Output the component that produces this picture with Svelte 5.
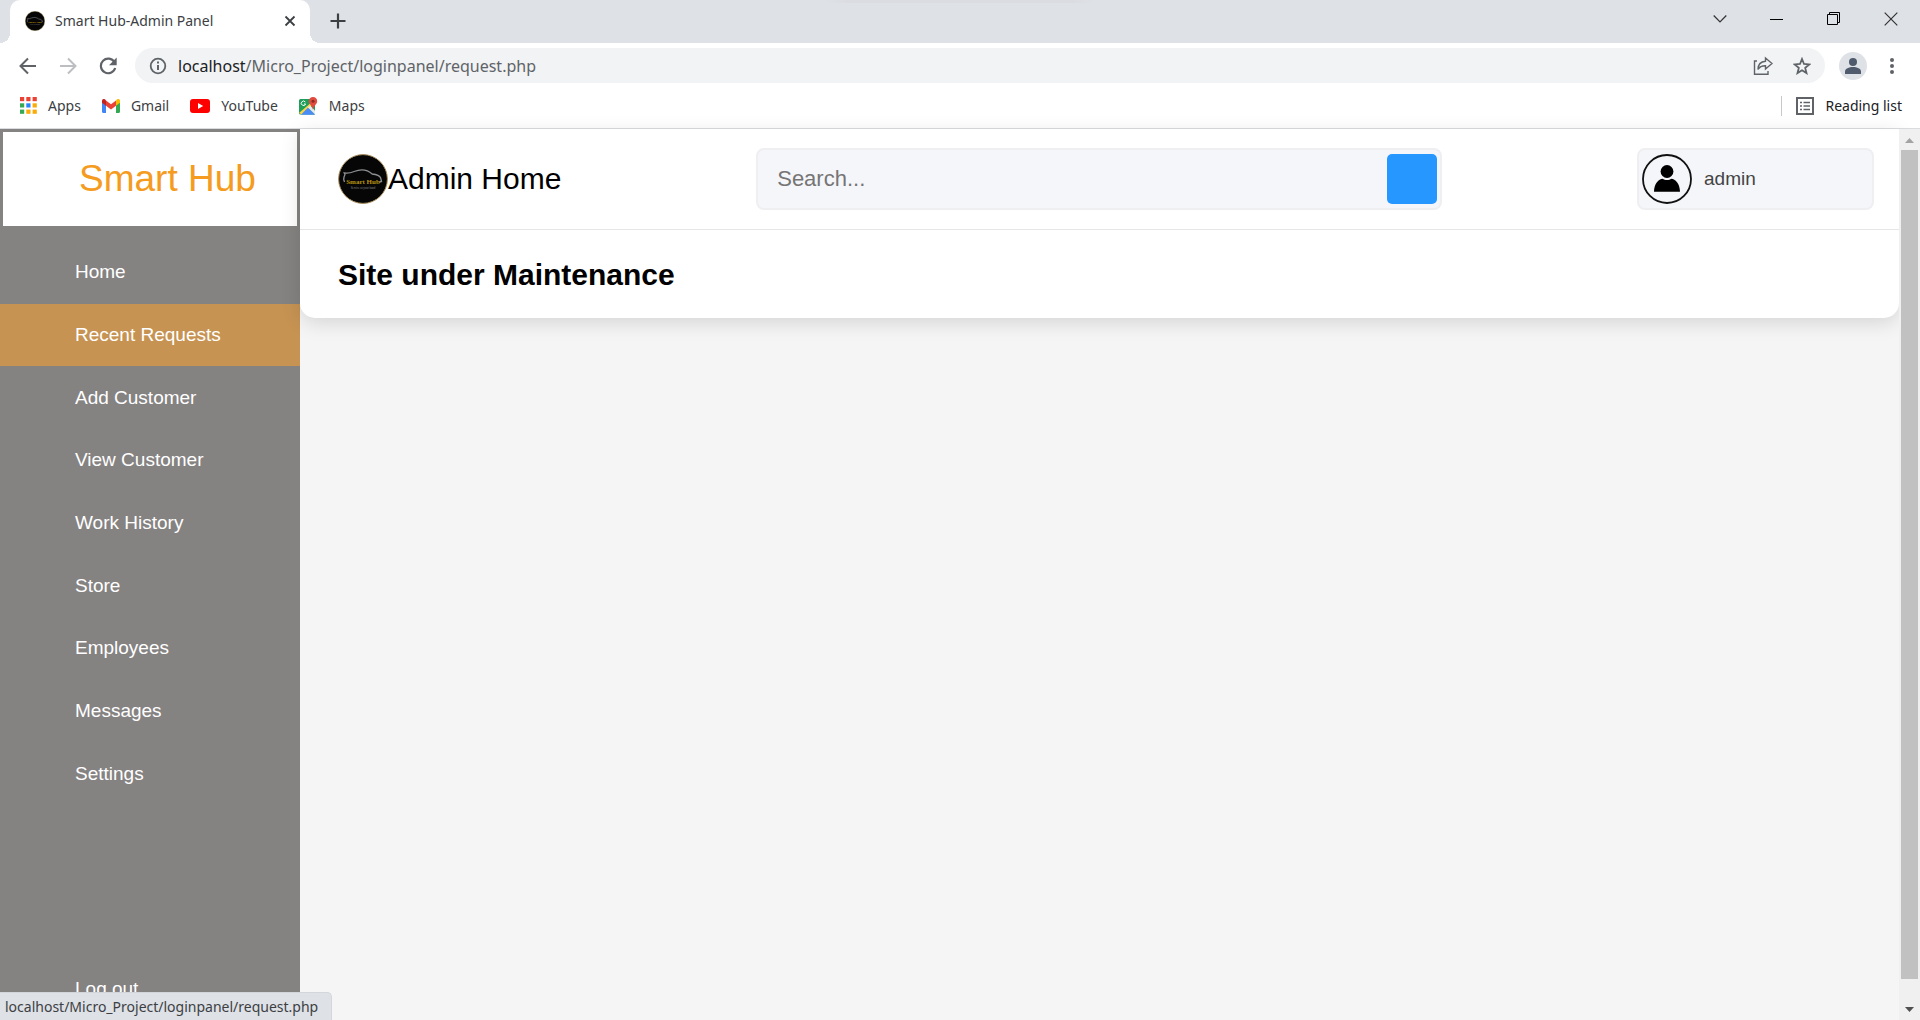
<script>
  const navItems = [
    'Home',
    'Recent Requests',
    'Add Customer',
    'View Customer',
    'Work History',
    'Store',
    'Employees',
    'Messages',
    'Settings'
  ];
  const active = 'Recent Requests';
  const appDots = ['#ea4335', '#ea4335', '#ea4335', '#34a853', '#2a85fb', '#fbab05', '#34a853', '#fbab05', '#fbab05'];
  let query = $state('');
</script>

{#snippet brandLogo()}
  <svg class="brand-logo" viewBox="0 0 50 50" aria-hidden="true">
    <circle cx="25" cy="25" r="24.4" fill="#060606" stroke="#a98f5c" stroke-width="1" />
    <path d="M6.500 28l-.8-2.500c0-2 .5-3.500 1.300-5l-.8-1.500c4 .5 7-.2 10-1.500 6-2.300 13-2 18 2.500 4 .3 7.500 1.500 8.500 4l.8 3.500-2 .5" fill="none" stroke="#8d8f92" stroke-width="1.300" />
    <text x="25" y="29.500" class="brand-name">Smart Hub</text>
    <text x="25" y="35" class="brand-tag">Service at your hand</text>
  </svg>
{/snippet}

<div class="browser">
  <header class="chrome">
    <div class="tab-strip">
      <div class="tab">
        <span class="favicon">{@render brandLogo()}</span>
        <span class="tab-title">Smart Hub-Admin Panel</span>
        <button class="icon-btn close-tab" aria-label="Close tab">
          <svg width="12" height="12" viewBox="0 0 12 12"><path d="M1.500 1.500l9 9m0-9l-9 9" stroke="#3c4043" stroke-width="1.800" /></svg>
        </button>
      </div>
      <button class="icon-btn new-tab" aria-label="New tab">
        <svg width="16" height="16" viewBox="0 0 16 16"><path d="M8 .5v15M.5 8h15" stroke="#3c4043" stroke-width="2.200" /></svg>
      </button>
      <div class="window-controls">
        <button class="icon-btn" aria-label="Search tabs">
          <svg width="14" height="14" viewBox="0 0 14 14"><path d="M.7 3.500L7 10l6.300-6.500" fill="none" stroke="#333" stroke-width="1.200" /></svg>
        </button>
        <button class="icon-btn" aria-label="Minimize">
          <svg width="14" height="14" viewBox="0 0 14 14"><path d="M0 7.500h13" stroke="#000" /></svg>
        </button>
        <button class="icon-btn" aria-label="Restore">
          <svg width="14" height="14" viewBox="0 0 14 14" fill="none" stroke="#000"><path d="M.5 2.500h10v10H.5zM2.500 2.500V.5h10v10h-2" /></svg>
        </button>
        <button class="icon-btn" aria-label="Close window">
          <svg width="14" height="14" viewBox="0 0 14 14"><path d="M.7.7l12.600 12.600m0-12.600L.7 13.300" stroke="#333" stroke-width="1.200" /></svg>
        </button>
      </div>
    </div>

    <div class="toolbar">
      <div class="history">
        <button class="icon-btn" aria-label="Back">
          <svg width="18" height="18" viewBox="0 0 18 18" fill="none" stroke="#5f6368" stroke-width="2"><path d="M17 9H2.500M9 1.500L1.500 9 9 16.500" /></svg>
        </button>
        <button class="icon-btn" aria-label="Forward">
          <svg width="18" height="18" viewBox="0 0 18 18" fill="none" stroke="#bcbec1" stroke-width="2"><path d="M1 9h14.500M9 1.500L16.500 9 9 16.500" /></svg>
        </button>
        <button class="icon-btn" aria-label="Reload">
          <svg width="18" height="18" viewBox="0 0 18 18"><path d="M15.500 5.200A7.300 7.300 0 1 0 16.200 11" fill="none" stroke="#5f6368" stroke-width="2.200" /><path d="M17.700.5v7.800H10z" fill="#5f6368" /></svg>
        </button>
      </div>
      <div class="omnibox">
        <svg width="18" height="18" viewBox="0 0 18 18"><circle cx="9" cy="9" r="7.300" fill="none" stroke="#5f6368" stroke-width="1.800" /><path d="M9 8v5M9 4.500v2" stroke="#5f6368" stroke-width="2" /></svg>
        <span class="url"><b>localhost</b>/Micro_Project/loginpanel/request.php</span>
        <button class="icon-btn" aria-label="Share this page">
          <svg width="20" height="20" viewBox="0 0 20 20" fill="none" stroke="#5f6368" stroke-width="1.400"><path d="M4 5H1.500v13.300H15V15" /><path d="M12.500 2l6.500 5.500-6.500 5.500v-3.300c-3.500 0-6 1-7.500 3.800 0-5 3-8 7.500-8.300z" /></svg>
        </button>
        <button class="icon-btn" aria-label="Bookmark this tab">
          <svg width="18" height="18" viewBox="0 0 18 18" fill="none" stroke="#5f6368" stroke-width="1.800"><path d="M9 2l2 5 5.300.4-4.100 3.500 1.300 5.200L9 13.300l-4.500 2.800 1.300-5.200L1.700 7.400 7 7z" /></svg>
        </button>
      </div>
      <button class="icon-btn account" aria-label="Profile">
        <svg width="28" height="28" viewBox="0 0 28 28"><circle cx="14" cy="14" r="14" fill="#dee1e6" /><circle cx="14" cy="10" r="4" fill="#4f5b6c" /><path d="M6 22v-2.500c0-3 4-4.500 8-4.500s8 1.500 8 4.500V22z" fill="#4f5b6c" /></svg>
      </button>
      <button class="icon-btn menu" aria-label="Browser menu">
        <svg width="4" height="18" viewBox="0 0 4 18" fill="#5f6368"><circle cx="2" cy="3" r="2" /><circle cx="2" cy="9" r="2" /><circle cx="2" cy="15" r="2" /></svg>
      </button>
    </div>

    <nav class="bookmarks" aria-label="Bookmarks">
      <a href="#apps">
        <svg width="17" height="17" viewBox="0 0 17 17">
          {#each appDots as color, i}
            <rect x={(i % 3) * 6.3} y={Math.floor(i / 3) * 6.3} width="4.200" height="4.200" fill={color} />
          {/each}
        </svg>
        <span>Apps</span>
      </a>
      <a href="#gmail">
        <svg width="18" height="14" viewBox="0 0 18 14"><path d="M0 2v10.800C0 13.500.5 14 1.200 14H4V6z" fill="#4285f4" /><path d="M18 2v10.800c0 .7-.5 1.200-1.200 1.200H14V6z" fill="#34a853" /><path d="M14 1.500V6.700l4-3V2c0-2-2-2.500-3.200-1.600z" fill="#fbbc04" /><path d="M4 6.700V1.500l5 3.800 5-3.800v5.200l-5 3.800z" fill="#ea4335" /><path d="M0 2v1.700l4 3V1.500L3.200.4C2-.5 0 0 0 2z" fill="#c5221f" /></svg>
        <span>Gmail</span>
      </a>
      <a href="#youtube">
        <svg width="20" height="14" viewBox="0 0 20 14"><rect width="20" height="14" rx="3" fill="#f00" /><path d="M8 4l5.200 3L8 10z" fill="#fff" /></svg>
        <span>YouTube</span>
      </a>
      <a href="#maps">
        <svg width="19" height="18" viewBox="0 0 19 18"><path d="M1.500 2H12l4 5v10.500H1.500A1.500 1.500 0 0 1 0 16V3.500A1.500 1.500 0 0 1 1.500 2z" fill="#1e9e58" /><path d="M0 16L14 4l2 2L3 17.500z" fill="#fbd349" /><path d="M2 17.800L9 10.500l7 7.300z" fill="#4b8bf5" /><path d="M9 10.500l2-2 5 5v4z" fill="#e8eaed" /><path d="M6.300 5a2.200 2.200 0 1 0 .3 2H5" fill="none" stroke="#fff" /><path d="M14 0a4.200 4.200 0 0 1 4.200 4.300c0 3-3.500 4-4.200 8.700-.7-4.700-4.200-5.700-4.200-8.700A4.200 4.200 0 0 1 14 0z" fill="#e04a3f" /><circle cx="14" cy="4.300" r="1.500" fill="#8b2b22" /></svg>
        <span>Maps</span>
      </a>
      <a class="reading" href="#reading">
        <svg width="18" height="18" viewBox="0 0 18 18"><rect x="1" y="1" width="16" height="16" fill="none" stroke="#5f6368" stroke-width="2" /><path d="M4 5.500h2M4 9h2M4 12.500h2M7.500 5.500H14M7.500 9H14M7.500 12.500H14" stroke="#5f6368" stroke-width="1.600" /></svg>
        <span>Reading list</span>
      </a>
    </nav>
  </header>

  <div class="viewport">
    <aside class="sidebar">
      <div class="brand">Smart Hub</div>
      <nav aria-label="Admin">
        <ul>
          {#each navItems as item}
            <li><a href="#{item}" class:active={item === active}>{item}</a></li>
          {/each}
        </ul>
      </nav>
      <a class="logout" href="#logout">Log out</a>
    </aside>

    <main>
      <div class="card">
        <div class="topbar">
          <div class="page-name">{@render brandLogo()}<span>Admin Home</span></div>
          <form class="search">
            <input type="text" placeholder="Search..." aria-label="Search" bind:value={query} />
            <button type="button" aria-label="Submit search"></button>
          </form>
          <div class="profile">
            <svg width="50" height="50" viewBox="0 0 50 50"><circle cx="25" cy="25" r="24" fill="#f5f6fa" stroke="#111" stroke-width="1.800" /><circle cx="25" cy="17.500" r="6.400" /><path d="M12 37.800c0-8 5-13 8.500-13 2.500 1.600 6.500 1.600 9 0 3.500 0 8.500 5 8.500 13z" /></svg>
            <span>admin</span>
          </div>
        </div>
        <h1>Site under Maintenance</h1>
      </div>
    </main>

    <div class="scrollbar" aria-hidden="true">
      <svg width="9" height="5" viewBox="0 0 9 5"><path d="M4.500 0L9 5H0z" fill="#a3a3a3" /></svg>
      <div class="thumb"></div>
      <svg width="9" height="5" viewBox="0 0 9 5"><path d="M0 0h9L4.500 5z" fill="#505050" /></svg>
    </div>
  </div>

  <div class="status">localhost/Micro_Project/loginpanel/request.php</div>
</div>

<style>
  :global(body) {
    margin: 0;
  }
  * {
    box-sizing: border-box;
  }
  svg {
    display: block;
    flex: none;
  }
  a {
    color: inherit;
    text-decoration: none;
  }
  .browser {
    position: relative;
    display: flex;
    flex-direction: column;
    height: 100vh;
    overflow: hidden;
    background: #f5f5f5;
    font-family: 'Liberation Sans', Arial, sans-serif;
  }
  .chrome {
    flex: none;
    background: #fff;
    border-bottom: 1px solid #dadce0;
    color: #3c4043;
    font-family: 'Noto Sans', 'Segoe UI', sans-serif;
    font-size: 14px;
  }
  .icon-btn {
    display: flex;
    align-items: center;
    justify-content: center;
    padding: 0;
    border: 0;
    background: none;
  }

  .tab-strip {
    position: relative;
    display: flex;
    height: 43px;
    padding-left: 10px;
    background: #dee1e6;
  }
  .tab-strip::before {
    content: '';
    position: absolute;
    top: 0;
    left: 43%;
    width: 14%;
    height: 3px;
    background: linear-gradient(90deg, #dee1e6, #dadce1 8%, #dadce1 92%, #dee1e6);
  }
  .tab {
    position: relative;
    display: flex;
    align-items: center;
    width: 300px;
    padding: 0 14px 2px 15px;
    border-radius: 10px 10px 0 0;
    background: #fff;
  }
  .tab::before,
  .tab::after {
    content: '';
    position: absolute;
    bottom: 0;
    width: 10px;
    height: 10px;
  }
  .tab::before {
    right: 100%;
    background: radial-gradient(circle at 0 0, #dee1e6 10px, #fff 10px);
  }
  .tab::after {
    left: 100%;
    background: radial-gradient(circle at 100% 0, #dee1e6 10px, #fff 10px);
  }
  .favicon {
    width: 20px;
    height: 20px;
    margin-right: 10px;
  }
  .brand-logo {
    width: 100%;
    height: 100%;
  }
  .brand-name {
    fill: #b8930f;
    font: bold 7px 'Liberation Serif', serif;
    text-anchor: middle;
  }
  .brand-tag {
    fill: #8a8a8a;
    font: 3px 'Liberation Serif', serif;
    text-anchor: middle;
  }
  .tab-title {
    flex: 1;
    white-space: nowrap;
  }
  .new-tab {
    width: 35px;
    margin-left: 10px;
    padding-bottom: 2px;
  }
  .window-controls {
    display: flex;
    height: 37px;
    margin-left: auto;
    padding-right: 1px;
  }
  .window-controls .icon-btn {
    width: 57px;
  }

  .toolbar {
    display: flex;
    align-items: center;
    height: 45px;
    padding: 0 26px 0 19px;
  }
  .history {
    display: flex;
    gap: 22px;
    margin-right: 18px;
  }
  .omnibox {
    flex: 1;
    display: flex;
    align-items: center;
    height: 35px;
    padding: 0 14px;
    border-radius: 18px;
    background: #f1f3f4;
  }
  .url {
    flex: 1;
    margin-left: 11px;
    color: #5f6368;
    font-size: 16px;
  }
  .url b {
    color: #202124;
    font-weight: 400;
  }
  .omnibox .icon-btn + .icon-btn {
    margin-left: 20px;
  }
  .account {
    margin: 0 23px 0 14px;
  }

  .bookmarks {
    display: flex;
    align-items: center;
    gap: 21px;
    height: 40px;
    padding: 0 18px 5px 20px;
  }
  .bookmarks a {
    display: flex;
    align-items: center;
    gap: 11px;
  }
  .bookmarks .reading {
    height: 20px;
    margin-left: auto;
    padding-left: 14px;
    border-left: 1px solid #c6c9cd;
    color: #202124;
  }

  .viewport {
    flex: 1;
    display: flex;
    min-height: 0;
  }
  .sidebar {
    flex: none;
    display: flex;
    flex-direction: column;
    width: 300px;
    background: #858282;
    color: #fff;
    font-size: 19px;
  }
  .brand {
    margin: 3px;
    padding: 26px 0 26px 76px;
    background: #fff;
    color: #f49b20;
    font-size: 37px;
    line-height: 42px;
  }
  .sidebar ul {
    display: grid;
    grid-auto-rows: 1fr;
    height: 564px;
    margin: 12px 0 0;
    padding: 0;
    list-style: none;
  }
  .sidebar li {
    display: grid;
  }
  .sidebar li a,
  .logout {
    display: flex;
    align-items: center;
    padding-left: 75px;
  }
  .active {
    background: #c69353;
  }
  .logout {
    height: 62px;
    margin-top: auto;
  }

  main {
    flex: 1;
    background: #f5f5f5;
  }
  .card {
    position: relative;
    border-radius: 0 0 15px 15px;
    background: #fff;
    box-shadow: 0 5px 20px rgba(0, 0, 0, 0.13);
  }
  .topbar {
    display: flex;
    align-items: center;
    justify-content: space-between;
    height: 101px;
    padding: 0 25px 0 38px;
    border-bottom: 1px solid #e6e6e6;
  }
  .page-name {
    display: flex;
    align-items: center;
    font-size: 30px;
  }
  .page-name .brand-logo {
    width: 50px;
    height: 50px;
  }
  .search,
  .profile {
    display: flex;
    align-items: center;
    height: 62px;
    padding: 4px 3px;
    border: 2px solid #efeef1;
    border-radius: 8px;
    background: #f5f6fa;
  }
  .search {
    flex: 0 1 686px;
  }
  .search input {
    flex: 1;
    min-width: 0;
    padding: 0 16px;
    border: 0;
    outline: 0;
    background: none;
    color: #333;
    font: 22px 'Liberation Sans', Arial, sans-serif;
  }
  .search input::placeholder {
    color: #757575;
  }
  .search button {
    width: 50px;
    height: 50px;
    border: 0;
    border-radius: 5px;
    background: #2697ff;
  }
  .profile {
    gap: 12px;
    width: 237px;
    color: #444;
    font-size: 19px;
  }
  h1 {
    margin: 0;
    padding: 28px 38px 26px;
    font-size: 30px;
    line-height: 34px;
  }

  .scrollbar {
    position: relative;
    flex: none;
    display: flex;
    flex-direction: column;
    align-items: center;
    justify-content: space-between;
    width: 21px;
    padding: 9px 0 8px;
    background: #f0f0f0;
  }
  .thumb {
    flex: 1;
    width: 17px;
    margin: 7px 0 28px;
    background: #c1c1c1;
  }

  .status {
    position: absolute;
    bottom: 0;
    left: 0;
    height: 28px;
    padding: 0 13px 0 5px;
    border: 1px solid #d3d6da;
    border-width: 1px 1px 0 0;
    border-radius: 0 5px 0 0;
    background: #dee1e6;
    color: #3c4043;
    font: 14px/27px 'Noto Sans', 'Segoe UI', sans-serif;
  }
</style>
